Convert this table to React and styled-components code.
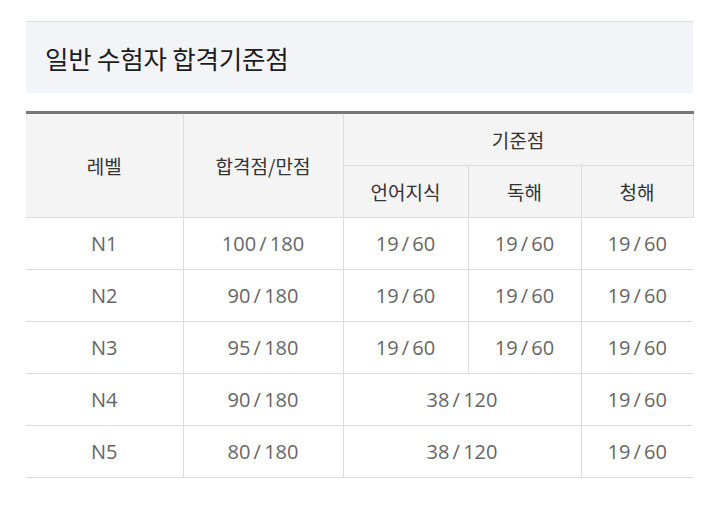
import React from 'react';
import styled, { createGlobalStyle } from 'styled-components';

const GlobalStyle = createGlobalStyle`
  body {
    margin: 0;
    background: #fff;
    font-family: "Open Sans", "Noto Sans CJK KR", sans-serif;
  }
`;

const Page = styled.div`
  width: 667px;
  padding: 21px 0 0 26px;
`;

const TitleBox = styled.div`
  display: flex;
  align-items: center;
  height: 71px;
  padding-left: 19px;
  border-top: 1px solid #dcdde0;
  background: #f3f4f8;
`;

const Title = styled.h2`
  margin: 0;
  font-family: "Noto Sans CJK KR", sans-serif;
  font-size: 25.5px;
  font-weight: 400;
  color: #1c1c1c;
  letter-spacing: -0.2px;
`;

const Table = styled.table`
  width: 667px;
  margin-top: 18px;
  border-collapse: collapse;
  table-layout: fixed;
  border-top: 3px solid #777;
`;

const Th = styled.th`
  height: 51px;
  padding: 0;
  background: #f4f4f4;
  font-family: "Noto Sans CJK KR", sans-serif;
  font-size: 19px;
  font-weight: 400;
  color: #333;
  border-bottom: 1px solid #dcdcdc;
  border-left: ${(p) => (p.$first ? 'none' : '1px solid #dcdcdc')};
  border-right: ${(p) => (p.$last ? '1px solid #dcdcdc' : 'none')};
`;

const Td = styled.td`
  height: 51px;
  padding: 0;
  text-align: center;
  font-size: 20px;
  color: #666;
  word-spacing: -2px;
  border-bottom: 1px solid #dcdcdc;
  border-left: ${(p) => (p.$first ? 'none' : '1px solid #dcdcdc')};
`;

const rows = [
  ['N1', '100 / 180', '19 / 60', '19 / 60', '19 / 60'],
  ['N2', '90 / 180', '19 / 60', '19 / 60', '19 / 60'],
  ['N3', '95 / 180', '19 / 60', '19 / 60', '19 / 60'],
  ['N4', '90 / 180', '38 / 120', null, '19 / 60'],
  ['N5', '80 / 180', '38 / 120', null, '19 / 60'],
];

export default function App() {
  return (
    <Page>
      <GlobalStyle />
      <TitleBox>
        <Title>일반 수험자 합격기준점</Title>
      </TitleBox>
      <Table>
        <colgroup>
          <col style={{ width: 157 }} />
          <col style={{ width: 160 }} />
          <col style={{ width: 125 }} />
          <col style={{ width: 113 }} />
          <col style={{ width: 112 }} />
        </colgroup>
        <thead>
          <tr>
            <Th rowSpan={2} $first>레벨</Th>
            <Th rowSpan={2}>합격점/만점</Th>
            <Th colSpan={3} $last>기준점</Th>
          </tr>
          <tr>
            <Th>언어지식</Th>
            <Th>독해</Th>
            <Th $last>청해</Th>
          </tr>
        </thead>
        <tbody>
          {rows.map((r) => (
            <tr key={r[0]}>
              <Td $first>{r[0]}</Td>
              <Td>{r[1]}</Td>
              {r[3] === null ? (
                <Td colSpan={2}>{r[2]}</Td>
              ) : (
                <>
                  <Td>{r[2]}</Td>
                  <Td>{r[3]}</Td>
                </>
              )}
              <Td>{r[4]}</Td>
            </tr>
          ))}
        </tbody>
      </Table>
    </Page>
  );
}
